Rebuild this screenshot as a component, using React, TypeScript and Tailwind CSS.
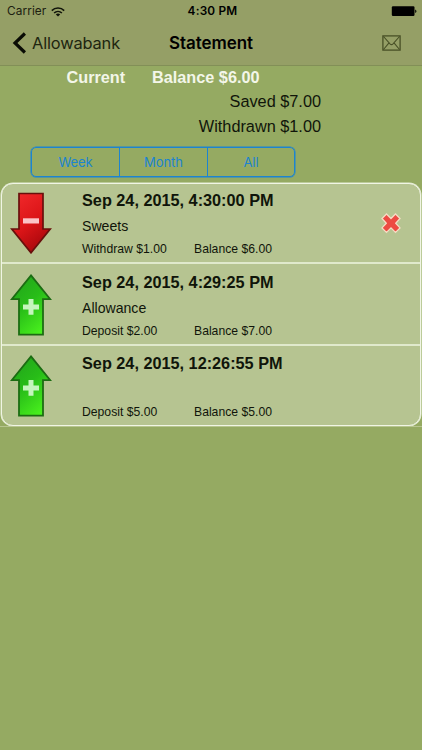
import clsx from "clsx";

interface Transaction {
  id: number;
  date: string;
  note: string;
  type: "Withdraw" | "Deposit";
  amount: string;
  balance: string;
}

const transactions: Transaction[] = [
  { id: 3, date: "Sep 24, 2015, 4:30:00 PM", note: "Sweets", type: "Withdraw", amount: "$1.00", balance: "$6.00" },
  { id: 2, date: "Sep 24, 2015, 4:29:25 PM", note: "Allowance", type: "Deposit", amount: "$2.00", balance: "$7.00" },
  { id: 1, date: "Sep 24, 2015, 12:26:55 PM", note: "", type: "Deposit", amount: "$5.00", balance: "$5.00" },
];

function WithdrawArrow() {
  return (
    <svg width="42" height="62" viewBox="0 0 42 62">
      <defs>
        <linearGradient id="red" x1="0.2" y1="0" x2="0.7" y2="1">
          <stop offset="0" stopColor="#f0282a" />
          <stop offset="0.5" stopColor="#dc1518" />
          <stop offset="1" stopColor="#a3060b" />
        </linearGradient>
      </defs>
      <path d="M9 1.5H33V37H40.2L21 60.8L1.8 37H9Z" fill="url(#red)" stroke="#68100c" strokeWidth="1.7" />
      <rect x="13" y="26.3" width="16" height="5.2" fill="#fbc4c7" />
    </svg>
  );
}

function DepositArrow() {
  return (
    <svg width="42" height="62" viewBox="0 0 42 62">
      <defs>
        <linearGradient id="green" x1="0.2" y1="0" x2="0.8" y2="1">
          <stop offset="0" stopColor="#22a51b" />
          <stop offset="0.45" stopColor="#28bd18" />
          <stop offset="1" stopColor="#4cf51e" />
        </linearGradient>
      </defs>
      <path d="M21 1.4L40.2 25.1H33V60.6H9V25.1H1.8Z" fill="url(#green)" stroke="#1c6c13" strokeWidth="1.8" />
      <path d="M18.5 25.1H23.5V30.6H29V35.6H23.5V40.8H18.5V35.6H13V30.6H18.5Z" fill="#c5f5bd" />
    </svg>
  );
}

function TransactionRow({ item, first, last }: { item: Transaction; first: boolean; last: boolean }) {
  return (
    <li
      className={clsx("flex pl-[8px]", {
        "h-[80px]": first,
        "h-[81.5px] pt-[1.5px]": !first,
        "border-b-2 border-[#e0e9cc]": !last,
      })}
    >
      <div className="w-[42px] pt-[8px] shrink-0">
        {item.type === "Withdraw" ? <WithdrawArrow /> : <DepositArrow />}
      </div>
      <div className="ml-[30px] flex-1 pt-[5px] text-[#10150a]">
        <h2 className="h-[22px] text-[16.25px] leading-[22px] font-bold">{item.date}</h2>
        <p className="mt-[6px] h-[18px] text-[14.1px] leading-[18px]">{item.note}</p>
        <div className="mt-[6px] flex text-[12.2px] leading-[16px]">
          <span className="w-[112px]">{item.type} {item.amount}</span>
          <span>Balance {item.balance}</span>
        </div>
      </div>
      {item.type === "Withdraw" && (
        <button className="mr-[17px] mt-[27px] h-[24px] w-[24px]">
          <svg width="24" height="24" viewBox="0 0 24 24">
            <path
              d="M7.5 3L12 7.5L16.5 3L21 7.5L16.7 12.2L21 16.9L16.5 21.4L12 16.9L7.5 21.4L3 16.9L7.3 12.2L3 7.5Z"
              fill="#ed4b42"
              stroke="#f5dcc4"
              strokeWidth="1.3"
            />
          </svg>
        </button>
      )}
    </li>
  );
}

export default function App() {
  return (
    <div className="h-[750px] w-[422px] overflow-hidden bg-[#95aa62] font-['Liberation_Sans',sans-serif]">
      <header className="h-[66px] border-b border-[#828f57] bg-[#959f66] font-['Inter',sans-serif] text-black">
        {/* Status bar */}
        <div className="grid h-[22px] grid-cols-3 items-center px-[7px] text-[11.8px]">
          <div className="flex items-center gap-[5px] pt-[1px] text-[#1c2010]">
            <span className="tracking-[0.1px]">Carrier</span>
            <svg width="14" height="10" viewBox="0 0 14 10" fill="none" stroke="#11140a" strokeWidth="1.6">
              <path d="M0.8 3.6C4.2 0.2 9.8 0.2 13.2 3.6" />
              <path d="M3.1 6C5.3 3.9 8.7 3.9 10.9 6" />
              <path d="M7 9.6L4.8 7.4C6 6.3 8 6.3 9.2 7.4Z" fill="#11140a" stroke="none" />
            </svg>
          </div>
          <span className="pl-[3px] pt-[1px] text-center font-semibold tracking-[0.2px]">4:30 PM</span>
          <svg className="-mr-[1.5px] justify-self-end" width="26" height="11" viewBox="0 0 26 11">
            <rect x="0.8" y="0.2" width="22.7" height="9.8" rx="1.2" />
            <path d="M24.2 3.4C25.9 4 25.9 6.3 24.2 7Z" />
          </svg>
        </div>

        <nav className="grid h-[43px] grid-cols-[140px_1fr_140px] items-center">
          <button className="flex items-center pl-[12px] text-[16.4px] text-[#20250f]">
            <svg width="15" height="22" viewBox="0 0 15 22" fill="none" stroke="#0a0c05" strokeWidth="3.2">
              <path d="M12.9 1.5L3 11L12.9 20.5" />
            </svg>
            <span className="ml-[5px] tracking-[-0.15px]">Allowabank</span>
          </button>
          <h1 className="text-center text-[17px] font-semibold tracking-[-0.05px]">Statement</h1>
          <button className="mr-[21px] mt-[-2px] justify-self-end">
            <svg width="19" height="16" viewBox="0 0 19 16" fill="none" stroke="#485026" strokeWidth="1.1">
              <rect x="0.9" y="0.9" width="17.2" height="14.2" strokeWidth="1.3" />
              <path d="M1.5 1.5L8 8.8Q9.5 10.4 11 8.8L17.5 1.5M1.5 14.5L7 7.8M17.5 14.5L12 7.8" />
            </svg>
          </button>
        </nav>
      </header>

      <section className="h-[117px]">
        <div className="flex h-[23px] pl-[66.5px] text-[16.25px] font-bold leading-[23px] text-[#f3f6e9]">
          <span className="w-[85.5px]">Current</span>
          <span>Balance $6.00</span>
        </div>
        <div className="w-[321px] text-right text-[16.3px] leading-[25px] text-[#10150a]">
          <p>Saved $7.00</p>
          <p>Withdrawn $1.00</p>
        </div>
        <div className="ml-[31px] mt-[8px] flex h-[30px] w-[264px] overflow-hidden rounded-[5px] border border-[#1c84d0] font-['Inter',sans-serif] text-[13px] tracking-[-0.05px] text-[#1c84d0] shadow-[0_0_0_0.5px_#1c84d0]">
          <button className="w-[88px] border-r border-[#1c84d0] pt-[2px]">Week</button>
          <button className="w-[88px] border-r border-[#1c84d0] pt-[2px]">Month</button>
          <button className="flex-1 pt-[2px]">All</button>
        </div>
      </section>

      <ul className="mx-px h-[243px] overflow-hidden rounded-[12px] border border-[#f0f5e4] bg-[#b6c491] shadow-[0_0_0_0.5px_#e4ecd2]">
        {transactions.map((item, i) => (
          <TransactionRow
            key={item.id}
            item={item}
            first={i === 0}
            last={i === transactions.length - 1}
          />
        ))}
      </ul>
      <hr className="border-t border-[#b7c58f]" />
    </div>
  );
}
